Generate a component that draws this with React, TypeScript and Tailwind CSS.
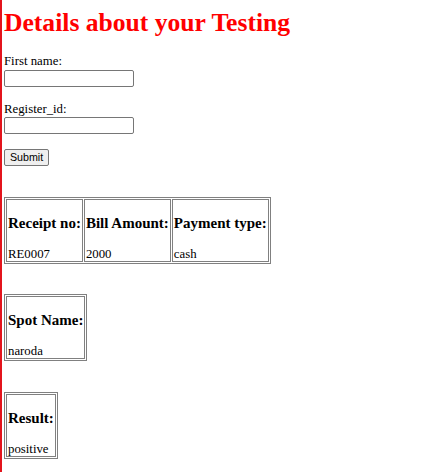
import React from 'react'

const cellBorder = 'border border-[#808080] p-[1px] align-middle text-left font-normal'

function InfoTable({ items, top }: { items: { label: string; value: string }[]; top: string }) {
  return (
    <table className={`${top} border-separate border-spacing-[1px] border border-[#808080]`}>
      <tbody>
        <tr>
          {items.map(it => (
            <td key={it.label} className={cellBorder}>
              <h3 className="mt-[14px] mb-[15px] whitespace-nowrap text-[15px] font-bold leading-[17px]">{it.label}</h3>
              <span className="block h-[13px] leading-[15px]">{it.value}</span>
            </td>
          ))}
        </tr>
      </tbody>
    </table>
  )
}

export default function App() {
  return (
    <div className="min-h-screen border-l-2 border-[#e3141c] bg-white pl-[2px] font-['Liberation_Serif',serif] text-[12.8px] leading-[15px] text-black">
      <h1 className="pt-[8px] text-[25.6px] font-bold leading-[30px] text-[#ff0000]">Details about your Testing</h1>

      <form onSubmit={e => e.preventDefault()}>
        <label htmlFor="fname" className="mt-[16px] block">First name:</label>
        <input
          id="fname"
          type="text"
          className="mt-[1px] block h-[17px] w-[130px] rounded-[2px] border border-[#767676] bg-white px-[2px] text-[10.67px] outline-none"
        />
        <label htmlFor="regid" className="mt-[15px] block">Register_id:</label>
        <input
          id="regid"
          type="text"
          className="block h-[17px] w-[130px] rounded-[2px] border border-[#767676] bg-white px-[2px] text-[10.67px] outline-none"
        />
        <button
          type="submit"
          className="mt-[15px] block h-[17px] rounded-[2px] border border-[#767676] bg-[#efefef] px-[5px] font-['Liberation_Sans',Arial,sans-serif] text-[10.67px] leading-[13px] text-black"
        >
          Submit
        </button>
      </form>

      <InfoTable
        top="mt-[31px]"
        items={[
          { label: 'Receipt no:', value: 'RE0007' },
          { label: 'Bill Amount:', value: '2000' },
          { label: 'Payment type:', value: 'cash' },
        ]}
      />
      <InfoTable top="mt-[30px]" items={[{ label: 'Spot Name:', value: 'naroda' }]} />
      <InfoTable top="mt-[31px]" items={[{ label: 'Result:', value: 'positive' }]} />
    </div>
  )
}
